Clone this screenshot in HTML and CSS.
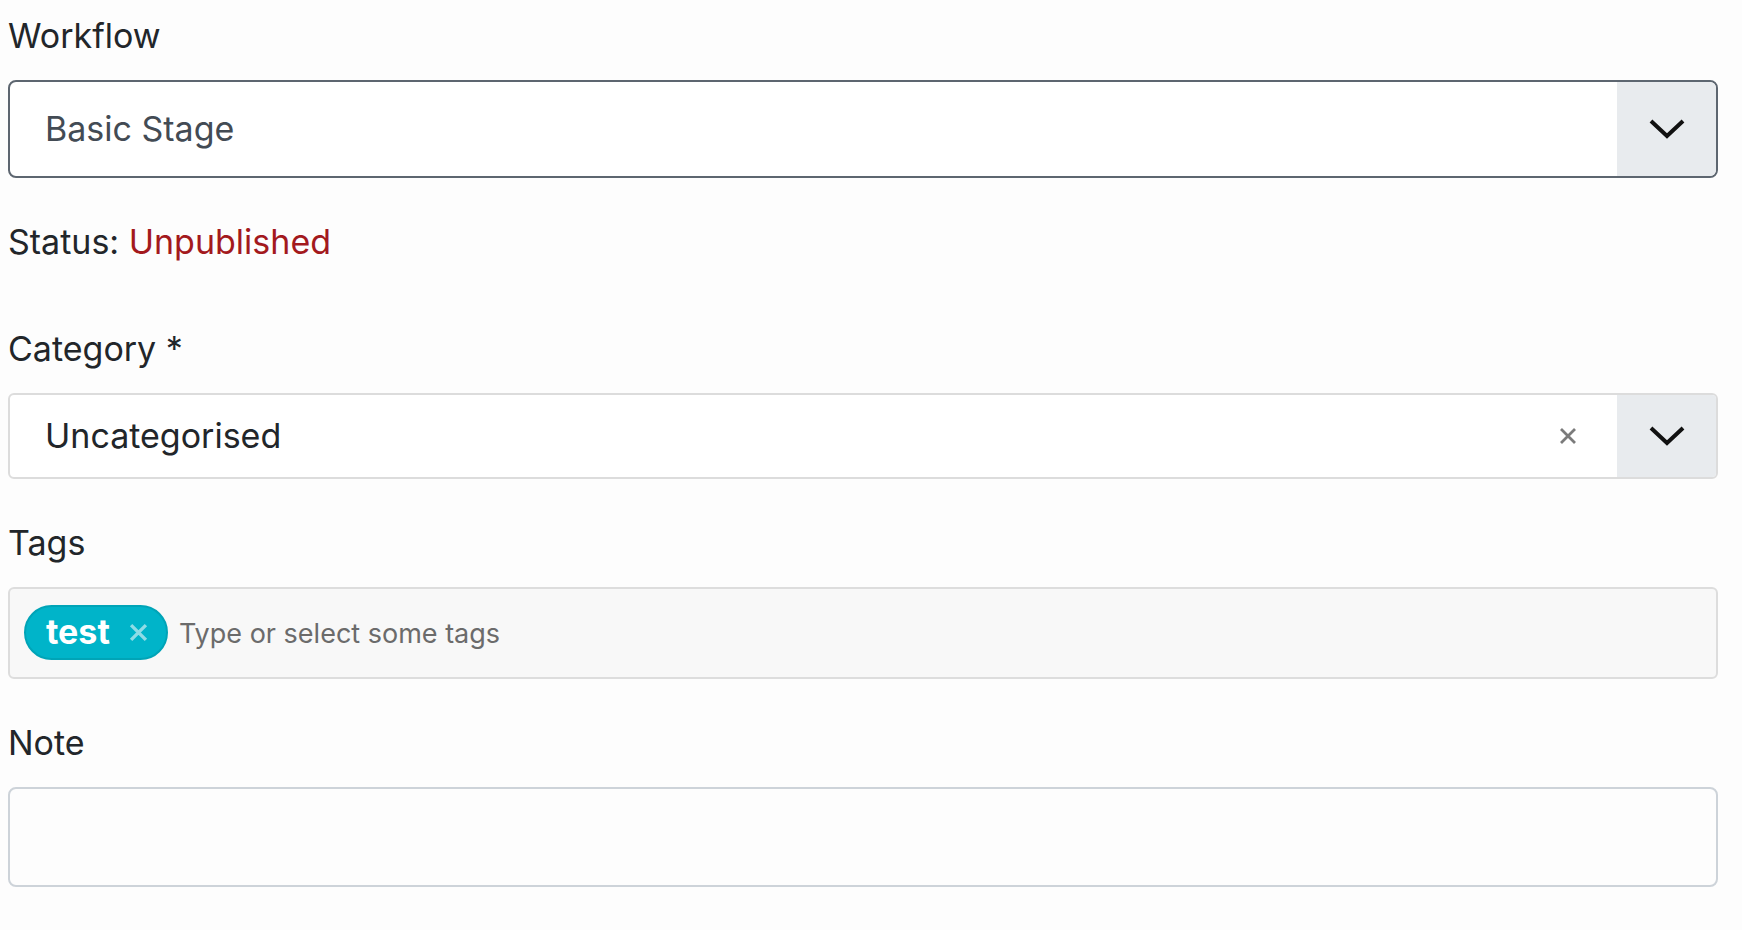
FILE: index.html
```html
<!DOCTYPE html>
<html lang="en">
<head>
<meta charset="utf-8">
<title>Workflow</title>
<link rel="stylesheet" href="styles.css">
</head>
<body>
<form class="form">
  <div class="field">
    <label class="label">Workflow</label>
    <div class="select select-dark">
      <div class="select-value select-value-muted">Basic Stage</div>
      <div class="select-btn">
        <svg class="chevron" viewBox="0 0 36 20" width="36" height="20"><path d="M2 2 L18 17 L34 2" fill="none" stroke="#111" stroke-width="4"/></svg>
      </div>
    </div>
  </div>

  <p class="status">Status: <span class="status-value">Unpublished</span></p>

  <div class="field">
    <label class="label">Category *</label>
    <div class="select select-light">
      <div class="select-value">Uncategorised</div>
      <div class="clear">
        <svg viewBox="0 0 18 18" width="18" height="18"><path d="M2 2 L16 16 M16 2 L2 16" stroke="#7b7b7b" stroke-width="2.8" fill="none"/></svg>
      </div>
      <div class="select-btn">
        <svg class="chevron" viewBox="0 0 36 20" width="36" height="20"><path d="M2 2 L18 17 L34 2" fill="none" stroke="#111" stroke-width="4"/></svg>
      </div>
    </div>
  </div>

  <div class="field">
    <label class="label">Tags</label>
    <div class="tags">
      <span class="tag">test
        <svg class="tag-x" viewBox="0 0 18 18" width="19" height="19"><path d="M2 2 L16 16 M16 2 L2 16" stroke="#8fdce6" stroke-width="3.2" fill="none"/></svg>
      </span>
      <span class="placeholder">Type or select some tags</span>
    </div>
  </div>

  <div class="field">
    <label class="label">Note</label>
    <div class="note"></div>
  </div>
</form>
</body>
</html>
```

FILE: styles.css
```css
html, body {
  margin: 0;
  padding: 0;
  background: #fdfdfd;
}

body {
  font-family: Inter, "Liberation Sans", Arial, sans-serif;
  color: #22262a;
}

.form {
  padding: 12px 24px 0 8px;
}

.field {
  margin-bottom: 40px;
}

.label {
  display: block;
  font-size: 34px;
  line-height: 48px;
  margin-bottom: 20px;
}

.select {
  display: flex;
  align-items: stretch;
  box-sizing: border-box;
  border-radius: 8px;
  overflow: hidden;
  background: #fff;
}

.select-dark {
  height: 98px;
  border: 2px solid #5d6670;
}

.select-light {
  height: 86px;
  border: 2px solid #dcdcdc;
  border-radius: 6px;
}

.select-value {
  flex: 1;
  display: flex;
  align-items: center;
  padding-left: 35px;
  font-size: 34px;
  line-height: 48px;
  color: #22262a;
}

.select-value-muted {
  color: #434b54;
}

.clear {
  display: flex;
  align-items: center;
  justify-content: center;
  width: 60px;
  margin-right: 19px;
}

.select-btn {
  width: 99px;
  display: flex;
  align-items: center;
  justify-content: center;
  background: #e8ebee;
}

.chevron {
  display: block;
}

.status {
  margin: 39px 0 59px;
  font-size: 34px;
  line-height: 48px;
}

.status-value {
  color: #a3191d;
}

.tags {
  box-sizing: border-box;
  height: 92px;
  border: 2px solid #dddddd;
  border-radius: 6px;
  background: #f8f8f8;
  display: flex;
  align-items: center;
  padding-left: 14px;
}

.tag {
  box-sizing: border-box;
  height: 55px;
  margin-top: -2px;
  display: inline-flex;
  align-items: center;
  padding: 0 18px 0 20px;
  border: 2px solid #00a4b7;
  border-radius: 28px;
  background: #00b4c9;
  color: #fff;
  font-weight: 700;
  font-size: 34px;
  line-height: 1;
}

.tag-x {
  display: block;
  margin-left: 19px;
}

.placeholder {
  margin-left: 11px;
  font-size: 27px;
  color: #6b6b6b;
}

.note {
  box-sizing: border-box;
  height: 100px;
  border: 2px solid #cdd3d9;
  border-radius: 8px;
  background: #fdfdfd;
}
```
